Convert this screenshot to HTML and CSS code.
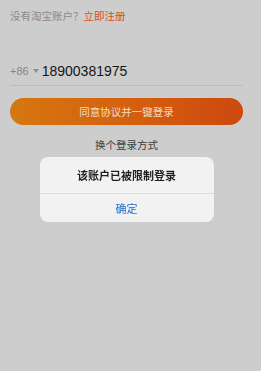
FILE: index.html
```html
<!DOCTYPE html>
<html lang="zh-CN">
<head>
    <meta charset="UTF-8">
    <meta name="viewport" content="width=device-width, initial-scale=1.0">
    <title>登录</title>
    <link rel="stylesheet" href="styles.css">
</head>
<body>
    <main class="page">
        <div class="signup-row">
            没有淘宝账户？<a class="signup-link" href="#">立即注册</a>
        </div>

        <div class="phone-row">
            <span class="country-code">+86</span>
            <svg class="caret" width="6" height="4" viewBox="0 0 6 4">
                <path d="M0 0 L6 0 L3 4 Z" fill="#8e8e8e"/>
            </svg>
            <span class="phone-number">18900381975</span>
        </div>

        <button class="btn-login">同意协议并一键登录</button>

        <div class="switch-login">换个登录方式</div>
    </main>

    <div class="overlay">
        <div class="dialog">
            <div class="dialog-title">该账户已被限制登录</div>
            <button class="dialog-btn">确定</button>
        </div>
    </div>
</body>
</html>
```

FILE: styles.css
```css
:root {
    --bg-dim: #cdcdcd;
    --text-muted: #8a8a8a;
    --text-dark: #151515;
    --accent: #d2521c;
    --line: #bdbdbd;
    --link-blue: #1b6fcf;
}

* {
    margin: 0;
    padding: 0;
    box-sizing: border-box;
}

body {
    font-family: 'Noto Sans CJK SC', 'Noto Sans', sans-serif;
    background-color: var(--bg-dim);
    color: var(--text-dark);
}

.page {
    padding: 8px 18px 0 10px;
}

.signup-row {
    font-size: 10.5px;
    line-height: 16px;
    color: var(--text-muted);
}

.signup-link {
    color: var(--accent);
    text-decoration: none;
}

.phone-row {
    display: flex;
    align-items: center;
    margin-top: 37px;
    height: 25px;
    padding-bottom: 5px;
    border-bottom: 1px solid var(--line);
}

.country-code {
    font-family: 'Liberation Sans', sans-serif;
    font-size: 11px;
    color: #858585;
}

.caret {
    margin: 0 3px 0 4px;
}

.phone-number {
    font-family: 'Liberation Sans', sans-serif;
    font-size: 14px;
    color: var(--text-dark);
}

.btn-login {
    display: block;
    width: 100%;
    height: 27px;
    margin-top: 12px;
    border: none;
    border-radius: 14px;
    background: linear-gradient(90deg, #d6770f 0%, #d4610f 50%, #cd480e 100%);
    color: #f3dcc4;
    font-family: inherit;
    font-size: 10.5px;
}

.switch-login {
    margin-top: 12px;
    text-align: center;
    font-size: 10.5px;
    line-height: 16px;
    color: #3c3c3c;
}

.overlay {
    position: fixed;
    inset: 0;
    display: flex;
    justify-content: center;
    align-items: flex-start;
    padding: 157px 18px 0 10px;
}

.dialog {
    width: 174px;
    background-color: #f2f2f2;
    border-radius: 8px;
    overflow: hidden;
}

.dialog-title {
    height: 37px;
    line-height: 37px;
    text-align: center;
    font-size: 11px;
    font-weight: 700;
    color: #1e1e1e;
    border-bottom: 1px solid #dddddd;
}

.dialog-btn {
    display: block;
    width: 100%;
    height: 28px;
    border: none;
    background: none;
    font-family: inherit;
    font-size: 11px;
    color: var(--link-blue);
}
```
